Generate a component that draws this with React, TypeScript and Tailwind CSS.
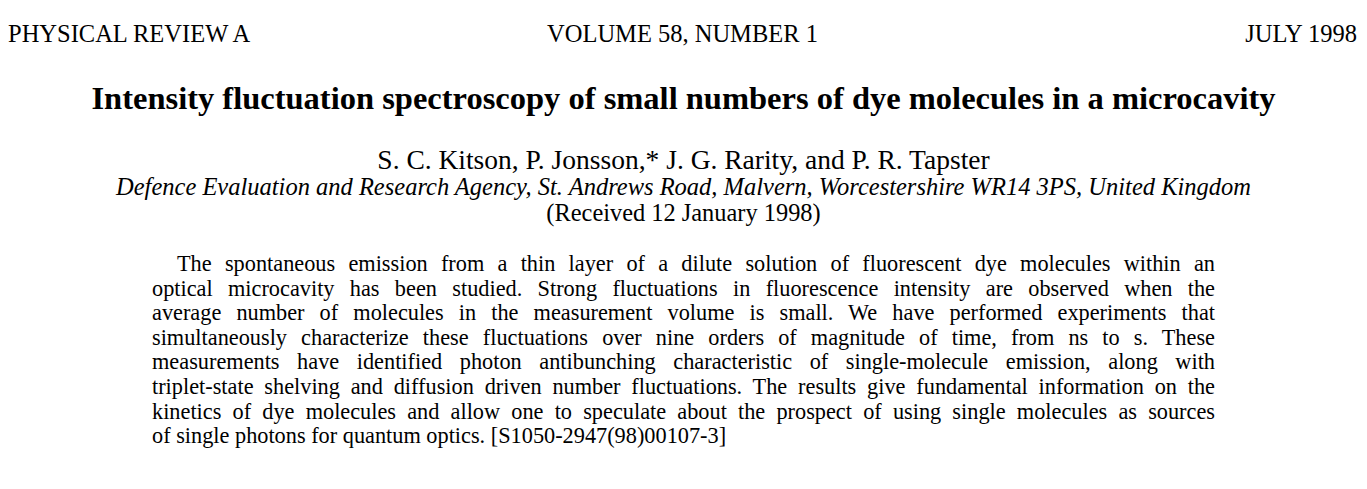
import React from "react";

const lines = [
  "The spontaneous emission from a thin layer of a dilute solution of fluorescent dye molecules within an",
  "optical microcavity has been studied. Strong fluctuations in fluorescence intensity are observed when the",
  "average number of molecules in the measurement volume is small. We have performed experiments that",
  "simultaneously characterize these fluctuations over nine orders of magnitude of time, from ns to s. These",
  "measurements have identified photon antibunching characteristic of single-molecule emission, along with",
  "triplet-state shelving and diffusion driven number fluctuations. The results give fundamental information on the",
  "kinetics of dye molecules and allow one to speculate about the prospect of using single molecules as sources",
];

export default function App() {
  return (
    <div
      className="w-[1367px] h-[489px] bg-white text-black overflow-hidden"
      style={{ fontFamily: '"Liberation Serif", "Times New Roman", serif' }}
    >
      <div className="grid grid-cols-3 items-center pl-[8px] pr-[10px] pt-[20px] text-[24.5px] leading-[28px]">
        <span className="text-left">PHYSICAL REVIEW A</span>
        <span className="text-center">VOLUME 58, NUMBER 1</span>
        <span className="text-right">JULY 1998</span>
      </div>
      <h1 className="mt-[32px] text-center font-bold text-[32.5px] leading-[36px]">
        Intensity fluctuation spectroscopy of small numbers of dye molecules in a microcavity
      </h1>
      <div className="mt-[31px] text-center text-[27.5px] leading-[26px]">
        S. C. Kitson, P. Jonsson,* J. G. Rarity, and P. R. Tapster
      </div>
      <div className="mt-[1px] text-center italic text-[24.5px] leading-[26px]">
        Defence Evaluation and Research Agency, St. Andrews Road, Malvern, Worcestershire WR14 3PS, United Kingdom
      </div>
      <div className="text-center text-[24.4px] leading-[26px]">(Received 12 January 1998)</div>
      <div className="mt-[26px] mx-auto w-[1063px] text-[22.3px] leading-[24.6px]">
        {lines.map((l, i) => (
          <div
            key={i}
            className={`whitespace-nowrap text-justify [text-align-last:justify] ${i === 0 ? "pl-[25px]" : ""}`}
          >
            {l}
          </div>
        ))}
        <div className="whitespace-nowrap">of single photons for quantum optics. [S1050-2947(98)00107-3]</div>
      </div>
    </div>
  );
}
